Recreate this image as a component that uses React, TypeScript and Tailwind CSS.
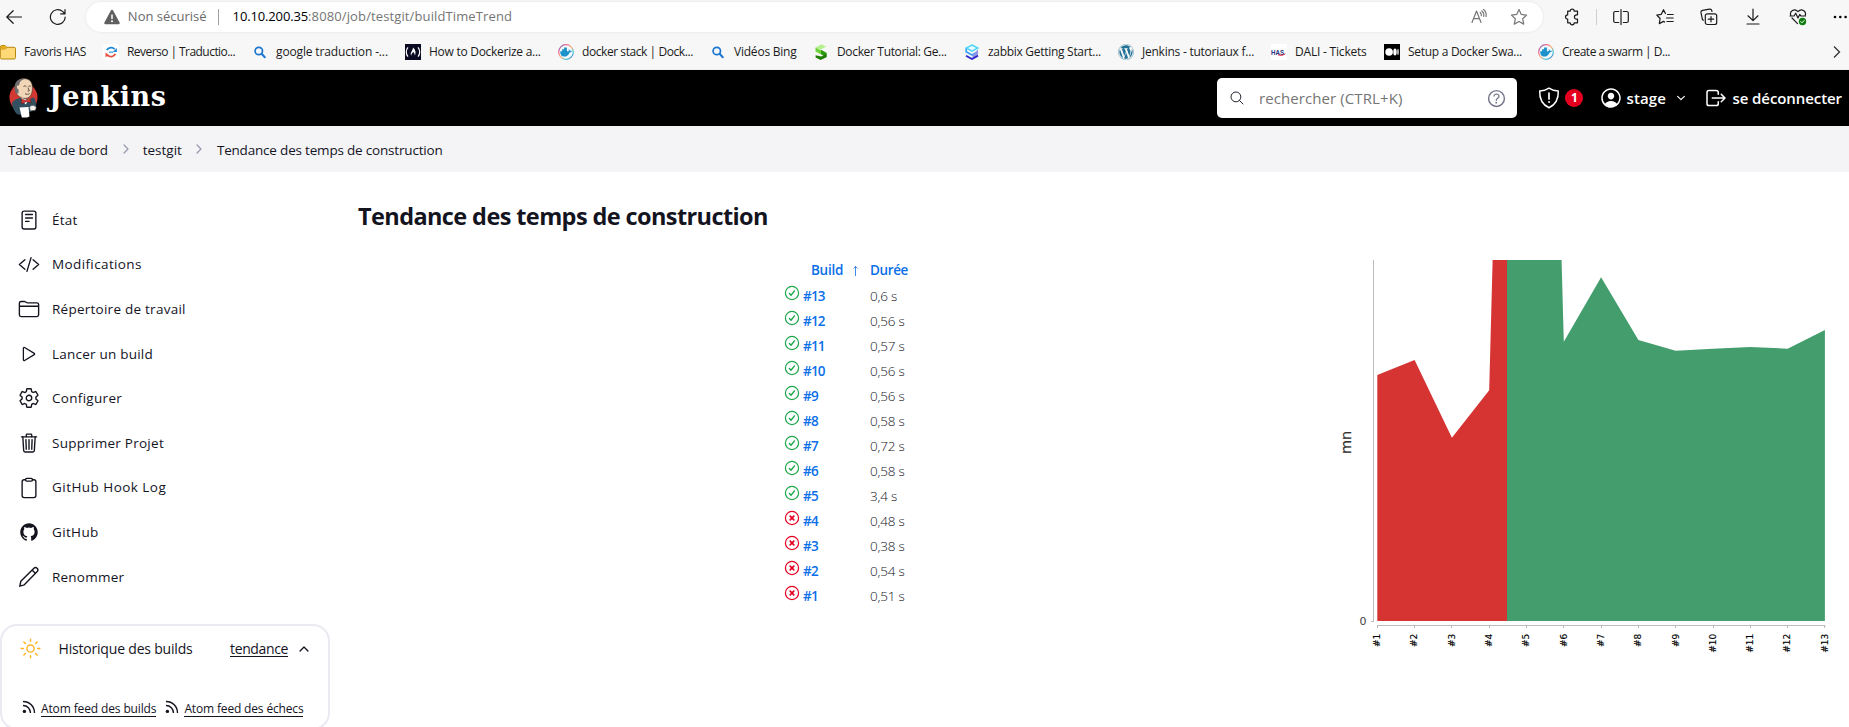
import type { ReactNode } from "react";
import {
  IoChevronDown,
  IoChevronForward,
  IoChevronUp,
  IoClipboardOutline,
  IoCodeSlashOutline,
  IoFolderOutline,
  IoHelpCircleOutline,
  IoLogOutOutline,
  IoLogoGithub,
  IoPersonCircleOutline,
  IoPlayOutline,
  IoReaderOutline,
  IoSearchOutline,
  IoSettingsOutline,
  IoSunnyOutline,
  IoTrashOutline,
} from "react-icons/io5";
import { FaWordpress } from "react-icons/fa";

/* ---------- Browser toolbar icons ---------- */

function Glyph({ children, className = "" }: { children: ReactNode; className?: string }) {
  return (
    <svg
      viewBox="0 0 18 18"
      width="18"
      height="18"
      fill="none"
      stroke="currentColor"
      strokeWidth="1.2"
      strokeLinecap="round"
      strokeLinejoin="round"
      className={`shrink-0 ${className}`}
    >
      {children}
    </svg>
  );
}

const BackIcon = () => (
  <Glyph>
    <path d="M16.5 9H2M8.2 2.7L1.8 9l6.4 6.3" />
  </Glyph>
);

const ReloadIcon = () => (
  <Glyph>
    <path d="M16.2 9A7.4 7.4 0 1 1 13.6 3.4L16 5.8M16 1.6v4.3h-4.3" />
  </Glyph>
);

const WarningIcon = () => (
  <svg viewBox="0 0 16 16" width="16" height="16" className="shrink-0">
    <path d="M8 .8c.5 0 .9.3 1.1.7l6.5 12c.4.8-.1 1.7-1 1.7H1.400c-.9 0-1.400-.9-1-1.700l6.500-12C7.100 1.100 7.500.8 8 .8z" fill="#5f5f5f" />
    <path d="M8 5.400v4.600" stroke="#fff" strokeWidth="1.500" />
    <circle cx="8" cy="12.300" r="1" fill="#fff" />
  </svg>
);

const ReadAloudIcon = () => (
  <Glyph className="text-[#767676]">
    <path d="M2 14.500L6.500 3l4.500 11.500M3.600 10.600h5.800M10.200 4.500c1 .8 1.300 2 1.100 3.200M11.800 2.900c1.700 1.300 2.300 3.400 1.900 5.500M13.500 1.500c2.300 1.800 3 4.400 2.600 7" />
  </Glyph>
);

const StarIcon = () => (
  <Glyph className="text-[#767676]">
    <path d="M9 1.500l2.300 4.900 5.300.7-3.900 3.700 1 5.300L9 13.500l-4.700 2.600 1-5.300L1.400 7.100l5.300-.7z" />
  </Glyph>
);

const PuzzleIcon = () => (
  <Glyph>
    <path d="M4.700 3.200h2.500a2 2 0 0 1 4 0h3.300v3.600h-.9a2.200 2.200 0 0 0 0 4.400h.9v3.600h-3.300a2 2 0 0 1-4 0H4.700v-3.600a2.200 2.200 0 0 1 0-4.400z" />
  </Glyph>
);

const SplitIcon = () => (
  <Glyph>
    <path d="M6.700 3.500H3.200A1.500 1.500 0 0 0 1.700 5v8a1.500 1.500 0 0 0 1.500 1.500h3.500M11.300 3.500h3.500A1.500 1.500 0 0 1 16.300 5v8a1.500 1.500 0 0 1-1.500 1.500h-3.500M9 1.500v15" />
  </Glyph>
);

const FavoritesIcon = () => (
  <Glyph>
    <path d="M9.400 5.500L7.500 1.700 5.300 6.300.8 7l3.300 3.500-.8 5.100 4.200-2.200 1.200.6M11.500 6.500h5.700M10.500 10h6.700M11 13.500h6.200" />
  </Glyph>
);

const CollectionsIcon = () => (
  <Glyph>
    <rect x="5.300" y="5.800" width="11.400" height="10.700" rx="2" />
    <path d="M11 8.500v5.300M8.300 11.200h5.400M3.300 12.300a2 2 0 0 1-1-1.300L1 4.700a2 2 0 0 1 1.500-2.300l7-1.300a2 2 0 0 1 2.300 1.500l.2.900" />
  </Glyph>
);

const DownloadIcon = () => (
  <Glyph>
    <path d="M9 1v11M4 7.800L9 12.600l5-4.800M3 16h12" />
  </Glyph>
);

const HealthIcon = () => (
  <Glyph>
    <path d="M1.800 7.500C.2 3.200 5.500-.2 9 3.700c3.500-3.900 8.800-.5 7.200 3.800M3 10l5.500 5.600M1 8h4l1.700-2.800L9 10l1.700-3.500L12 8h4.500" />
    <circle cx="13.500" cy="13.500" r="3.700" fill="#107c10" stroke="none" />
    <path d="M11.800 13.600l1.200 1.200 2.200-2.300" stroke="#fff" strokeWidth="1" />
  </Glyph>
);

const MoreIcon = () => (
  <svg viewBox="0 0 16 4" width="16" height="4" className="shrink-0">
    <circle cx="2" cy="2" r="1.300" />
    <circle cx="7.300" cy="2" r="1.300" />
    <circle cx="12.600" cy="2" r="1.300" />
  </svg>
);

/* ---------- Bookmark favicons ---------- */

const Favicon = ({ children }: { children: ReactNode }) => (
  <svg viewBox="0 0 16 16" width="16" height="16" className="shrink-0">
    {children}
  </svg>
);

const FolderFav = () => (
  <Favicon>
    <path d="M.3 3.200A1.700 1.700 0 0 1 2 1.500h3.200l1.600 1.800H14a1.500 1.500 0 0 1 1.500 1.500v8.700A1.500 1.500 0 0 1 14 15H1.800a1.500 1.500 0 0 1-1.500-1.500z" fill="#ffd977" stroke="#b8860b" />
    <path d="M.8 5h4.700l1.500-1.600" fill="none" stroke="#b8860b" strokeWidth=".8" />
    <path d="M1 2.300h4.200l1 1.200-1.200 1.200H1z" fill="#e5a80c" />
  </Favicon>
);

const ReversoFav = () => (
  <Favicon>
    <rect width="16" height="16" rx="3" fill="#fff" />
    <path d="M3.800 6.200A4.700 4.700 0 0 1 11.700 5.300" fill="none" stroke="#1f86d8" strokeWidth="1.800" />
    <path d="M13.800 3.900v4h-4z" fill="#1f86d8" />
    <path d="M12.300 9.800A4.700 4.700 0 0 1 4.600 11.200" fill="none" stroke="#e8503f" strokeWidth="1.800" />
    <path d="M2.500 8.600v4.400l4-1.500z" fill="#e8503f" />
    <path d="M6 8.200h4.200" stroke="#5aaae6" strokeWidth="1.500" />
  </Favicon>
);

const SearchFav = () => (
  <Favicon>
    <circle cx="6.800" cy="7" r="3.700" fill="none" stroke="#1b76d2" strokeWidth="1.700" />
    <path d="M9.600 9.800l3.200 3.400" stroke="#1b76d2" strokeWidth="2" strokeLinecap="round" />
  </Favicon>
);

const CampFav = () => (
  <Favicon>
    <rect width="16" height="16" fill="#0a0a23" />
    <path d="M3 3.300c-2.300 2.700-2.300 6.700 0 9.400M13 3.300c2.300 2.700 2.300 6.700 0 9.400" fill="none" stroke="#fff" strokeWidth="1.200" />
    <path d="M8 3.500c2.600 2.300 3.400 5.400 1.700 8.200.3-1.900-.6-2.500-1.500-3.900-.6 1.500-2.200 2.100-1.800 3.900C4.300 9 7.800 7 8 3.500z" fill="#fff" />
  </Favicon>
);

const DockerFav = () => (
  <Favicon>
    <defs>
      <linearGradient id="dockerRing" x1="0" y1="0" x2="1" y2="1">
        <stop offset="0" stopColor="#3b6fd0" />
        <stop offset=".25" stopColor="#f06292" />
        <stop offset=".5" stopColor="#ffab6b" />
        <stop offset=".75" stopColor="#3fc9d8" />
        <stop offset="1" stopColor="#5b4fc0" />
      </linearGradient>
    </defs>
    <circle cx="8" cy="8" r="7.300" fill="#f3fbff" stroke="url(#dockerRing)" strokeWidth="1.200" />
    <path d="M2.200 7.200h1.900V5.300h2V3.600h2.800v3.600h1.800c.2-1 .1-1.500-.3-2.300 1.100.5 1.600 1.200 1.600 2 .8-.1 1.500 0 2 .4-.5.800-1.300 1.100-2.300 1.100-1 2.600-2.900 4.200-5.700 4.200C3.500 12.600 2.100 10.600 2.200 7.200z" fill="#1d91c9" />
  </Favicon>
);

const StackifyFav = () => (
  <Favicon>
    <path d="M2.500 3.600L8.500.3l4.700 2.400-6 3z" fill="#b5f08e" />
    <path d="M2.500 3.600v4l5.800 2.900V6.500z" fill="#6fd43b" />
    <path d="M8 5.800l5.500 3v4.400L8 10.300z" fill="#2d9a12" />
    <path d="M13.500 9.500v3.700L7.600 16l-5-2.500v-2.300l5.700 1.300z" fill="#1f7d08" />
  </Favicon>
);

const SpiceFav = () => (
  <Favicon>
    <path d="M8 1l5.800 3L8 7.200 2.200 4z" fill="#eafcff" stroke="#4fd6f5" strokeWidth="1.500" />
    <path d="M2.200 4.500v3.300L8 11l5.800-3.200" fill="none" stroke="#3aa2f2" strokeWidth="1.700" />
    <path d="M14 5.500v6.300L8.500 15v-4z" fill="#8e97e8" />
    <path d="M2 11.700L8 15l6-3.300" fill="none" stroke="#2a25c9" strokeWidth="1.800" />
  </Favicon>
);

const WordpressFav = () => <FaWordpress size={16} className="shrink-0 text-[#207196]" />;

const HasFav = () => (
  <Favicon>
    <rect width="16" height="16" fill="#fff" />
    <text x="0" y="10.800" fontSize="8" fontWeight="700" fontFamily="Liberation Sans, sans-serif" fill="#27307c" textLength="13" lengthAdjust="spacingAndGlyphs">
      HAS
    </text>
    <path d="M7 10.800c2.500.9 5.300.6 7.500-1.100" stroke="#e1203c" strokeWidth="1" fill="none" />
  </Favicon>
);

const MediumFav = () => (
  <Favicon>
    <rect width="16" height="16" fill="#000" />
    <circle cx="5.100" cy="8" r="3.800" fill="#fff" />
    <ellipse cx="11" cy="8" rx="1.700" ry="3.600" fill="#fff" />
    <ellipse cx="14" cy="8" rx=".7" ry="3.300" fill="#fff" />
  </Favicon>
);

const bookmarks: { icon: () => ReactNode; label: string; item: string; text: string }[] = [
  { icon: FolderFav, label: "Favoris HAS", item: "w-[103px]", text: "tracking-[-0.35px]" },
  { icon: ReversoFav, label: "Reverso | Traductio...", item: "w-[149px]", text: "tracking-[-0.55px]" },
  { icon: SearchFav, label: "google traduction -...", item: "w-[153px]", text: "tracking-[-0.14px]" },
  { icon: CampFav, label: "How to Dockerize a...", item: "w-[153px]", text: "tracking-[-0.27px]" },
  { icon: DockerFav, label: "docker stack | Dock...", item: "w-[152px]", text: "tracking-[-0.43px]" },
  { icon: SearchFav, label: "Vidéos Bing", item: "w-[103px]", text: "tracking-[-0.22px]" },
  { icon: StackifyFav, label: "Docker Tutorial: Ge...", item: "w-[151px]", text: "tracking-[-0.34px]" },
  { icon: SpiceFav, label: "zabbix Getting Start...", item: "w-[154px]", text: "tracking-[-0.29px]" },
  { icon: WordpressFav, label: "Jenkins - tutoriaux f...", item: "w-[153px]", text: "tracking-[-0.24px]" },
  { icon: HasFav, label: "DALI - Tickets", item: "w-[113px]", text: "tracking-[-0.2px]" },
  { icon: MediumFav, label: "Setup a Docker Swa...", item: "w-[154px]", text: "tracking-[-0.29px]" },
  { icon: DockerFav, label: "Create a swarm | D...", item: "w-[153px]", text: "tracking-[-0.5px]" },
];

function BrowserChrome() {
  return (
    <div className="h-[70px] shrink-0 border-b border-[#ececec] bg-[#f7f7f7] text-[#1b1b1b]">
      <div className="flex h-[34px] items-center">
        <div className="flex w-[86px] items-center gap-[26px] pl-[5px]">
          <BackIcon />
          <ReloadIcon />
        </div>
        <div className="flex h-[30px] w-[1459px] items-center rounded-full bg-white pr-[15px] pl-[18px] text-[13px] shadow-[0_0_3px_rgba(0,0,0,0.09)]">
          <WarningIcon />
          <span className="ml-2 text-[#6a6a6a]">Non sécurisé</span>
          <span className="mx-[11px] h-4 w-px bg-[#a0a0a0]" />
          <span className="ml-[3px] tracking-[-0.14px] text-black">10.10.200.35</span>
          <span className="tracking-[0.12px] text-[#757575]">:8080/job/testgit/buildTimeTrend</span>
          <span className="ml-auto flex gap-[22px]">
            <ReadAloudIcon />
            <StarIcon />
          </span>
        </div>
        <div className="flex flex-1 items-center pl-5">
          <PuzzleIcon />
          <span className="mx-[15px] h-4 w-px bg-[#cfcfcf]" />
          <div className="flex items-center gap-[26.300px]">
            <SplitIcon />
            <FavoritesIcon />
            <CollectionsIcon />
            <DownloadIcon />
            <HealthIcon />
            <MoreIcon />
          </div>
        </div>
      </div>
      <div className="flex h-[35px] items-center text-xs">
        {bookmarks.map(({ icon: Icon, label, item, text }) => (
          <div key={label} className={`flex shrink-0 items-center gap-2 whitespace-nowrap ${item}`}>
            <Icon />
            <span className={text}>{label}</span>
          </div>
        ))}
        <svg viewBox="0 0 8 14" width="8" height="14" className="mr-[8px] ml-auto" fill="none" stroke="#333" strokeWidth="1.300">
          <path d="M1 1.500L6.500 7 1 12.500" />
        </svg>
      </div>
    </div>
  );
}

/* ---------- Jenkins ---------- */

const JenkinsMascot = () => (
  <svg viewBox="0 0 29 40" width="29" height="40" className="shrink-0">
    <ellipse cx="14.500" cy="19.500" rx="14" ry="14.500" fill="#d33833" />
    <path d="M6.500 13C5 5 9 .5 15 .6c6 .1 8.700 4 8.400 9.900-.2 5-1.700 8.500-5.400 9.700-4 1-8-1.200-10-4z" fill="#f0d6b7" stroke="#3a2c28" strokeWidth=".6" />
    <path d="M6.700 15C4 9 6 2 12 .9c1.200-.2 2.600-.3 3.600 0C11 2 10.400 5 10 8c-.6-1-1.900-.9-2.100.6-.2 1.700.7 2.900 1.800 2.900l-.3 4z" fill="#6d6b6d" />
    <path d="M14.500 8.500c1-.9 2-.7 2.800 0M19.500 8.400c.9-.6 1.700-.5 2.400 0M16 15.700c1.700.9 3.300.8 4.600-.2M19 9.500l1.300 3.300-1.700.3" fill="none" stroke="#3a2c28" strokeWidth=".8" />
    <path d="M3 24.500c2.500-3 5-4 8.500-4.800L19 22l5.500-2.800c2.300 2.500 3 6 2.700 10.300L23 33l-8 4-6.500-.5C5 33.500 3 29 3 24.500z" fill="#335061" />
    <path d="M11.500 19.500l5 7 5.500-6.500-4.500 1.700z" fill="#fff" />
    <path d="M12 20.500l4.500 2 5-2.300.6 4.600-5-1-4.300 2.200z" fill="#d33833" stroke="#3a1010" strokeWidth=".4" />
    <path d="M10.500 29.500l9-.5 1 9.500-2.500 1h-5.200z" fill="#fff" />
    <path d="M20.500 29c2.300-2.200 4.800-1.700 6.700.3l-.8 3-5 .5z" fill="#f7f1ec" stroke="#555" strokeWidth=".5" />
  </svg>
);

const ShieldIcon = () => (
  <svg viewBox="0 0 22 22" width="22" height="22" fill="none" stroke="#fff" strokeWidth="1.500" strokeLinejoin="round" strokeLinecap="round" className="shrink-0">
    <path d="M11 1.200c2.600 1.800 5.700 2.700 9.300 2.800.3 7.400-2 13.300-9.300 16.800C3.700 17.300 1.400 11.400 1.700 4c3.600-.1 6.700-1 9.300-2.800z" />
    <path d="M11 6v6" strokeWidth="1.700" />
    <circle cx="11" cy="15" r=".6" fill="#fff" strokeWidth=".8" />
  </svg>
);

function JenkinsHeader() {
  return (
    <header className="flex h-14 shrink-0 items-center bg-black text-[15px] font-semibold text-white">
      <a className="flex items-center gap-[11px] pl-[9px]">
        <JenkinsMascot />
        <span className="-mt-1 font-['DejaVu_Serif'] text-[27px] leading-none font-bold tracking-[0.600px]">Jenkins</span>
      </a>
      <div className="ml-auto flex h-10 w-[300px] items-center rounded-[5px] bg-white pr-[11px] pl-3 font-normal">
        <IoSearchOutline size={16} className="text-[#22222e]" />
        <span className="ml-[13.500px] tracking-[0.09px] text-[#757575]">rechercher (CTRL+K)</span>
        <IoHelpCircleOutline size={23} className="ml-auto -mr-0.5 text-[#73738c]" />
      </div>
      <div className="ml-[21px] flex items-center gap-[5px]">
        <ShieldIcon />
        <span className="flex size-[18px] items-center justify-center rounded-full bg-[#e6001f] text-xs leading-none font-bold">1</span>
      </div>
      <div className="ml-[16px] flex w-[88px] items-center">
        <IoPersonCircleOutline size={24} />
        <span className="ml-[3px] tracking-[0.12px]">stage</span>
        <IoChevronDown size={12} className="ml-auto" />
      </div>
      <div className="ml-[17px] flex items-center">
        <IoLogOutOutline size={24} />
        <span className="mr-[7px] ml-[4px] tracking-[-0.08px]">se déconnecter</span>
      </div>
    </header>
  );
}

function Breadcrumbs() {
  return (
    <nav className="flex h-[46px] shrink-0 items-center bg-[#f4f4f7] pt-[2px] pl-[8px] text-[13.500px]">
      <span className="tracking-[-0.22px]">Tableau de bord</span>
      <IoChevronForward size={14} className="-mt-[3px] mr-[10px] ml-[11px] text-[#9a9ab0]" />
      <span>testgit</span>
      <IoChevronForward size={14} className="-mt-[3px] mr-[11px] ml-[10px] text-[#9a9ab0]" />
      <span className="tracking-[-0.19px]">Tendance des temps de construction</span>
    </nav>
  );
}

const PencilIcon = () => (
  <svg viewBox="0 0 22 22" width="22" height="22" fill="none" stroke="currentColor" strokeWidth="1.400" strokeLinejoin="round" className="shrink-0">
    <path d="M1.800 20.200l1-4.900L15.700 2.400c1-1 2.500-1 3.400-.1.900.9.900 2.400-.1 3.400L6.300 18.800z" />
    <path d="M14.100 4.100l3.400 3.300" />
  </svg>
);

const tasks: { icon: ReactNode; label: string; text: string }[] = [
  { icon: <IoReaderOutline size={22} />, label: "État", text: "tracking-[0.25px]" },
  { icon: <IoCodeSlashOutline size={23} />, label: "Modifications", text: "tracking-[0.38px]" },
  { icon: <IoFolderOutline size={22} />, label: "Répertoire de travail", text: "tracking-[0.25px]" },
  { icon: <IoPlayOutline size={20} />, label: "Lancer un build", text: "tracking-[0.22px]" },
  { icon: <IoSettingsOutline size={22} />, label: "Configurer", text: "tracking-[0.3px]" },
  { icon: <IoTrashOutline size={22} />, label: "Supprimer Projet", text: "tracking-[0.26px]" },
  { icon: <IoClipboardOutline size={22} />, label: "GitHub Hook Log", text: "tracking-[0.46px]" },
  { icon: <IoLogoGithub size={20} />, label: "GitHub", text: "tracking-[0.35px]" },
  { icon: <PencilIcon />, label: "Renommer", text: "tracking-[0.22px]" },
];

const FeedIcon = () => (
  <svg viewBox="0 0 14 14" width="14" height="14" fill="none" stroke="#14141f" strokeWidth="1.400" className="-mt-1.5 shrink-0">
    <path d="M1 1.500c6.600 0 11.500 4.900 11.500 11.500M1 5.500c4.300 0 7.500 3.200 7.500 7.500" />
    <circle cx="2.400" cy="11.400" r="1.700" fill="#14141f" stroke="none" />
  </svg>
);

function SidePanel() {
  return (
    <aside className="flex w-[330px] shrink-0 flex-col">
      <ul className="mt-[25.700px] text-[13.500px]">
        {tasks.map(({ icon, label, text }) => (
          <li key={label} className="flex h-[44.600px] items-center">
            <span className="ml-[18px] flex w-[22px] justify-center">{icon}</span>
            <span className={`ml-[12px] ${text}`}>{label}</span>
          </li>
        ))}
      </ul>
      <section className="mt-[25.400px] h-[106px] shrink-0 rounded-[17px] border-2 border-[#eaeaf2]">
        <div className="flex h-[45px] items-center pl-[16.500px] text-sm">
          <IoSunnyOutline size={23} className="text-[#ffb31f]" />
          <span className="ml-[17px] tracking-[-0.19px]">Historique des builds</span>
          <span className="ml-auto border-b border-[#14141f] leading-[15px] tracking-[-0.37px]">tendance</span>
          <IoChevronUp size={14} className="mr-[17px] ml-[9px]" strokeWidth="8" />
        </div>
        <div className="mt-[31px] flex items-center pl-[20px] text-xs">
          <FeedIcon />
          <span className="ml-[5px] border-b border-[#14141f] leading-[14px] tracking-[-0.13px]">Atom feed des builds</span>
          <span className="w-[9px]" />
          <FeedIcon />
          <span className="ml-[5px] border-b border-[#14141f] leading-[14px] tracking-[-0.16px]">Atom feed des échecs</span>
        </div>
      </section>
    </aside>
  );
}

const builds: { id: number; duration: string; ok: boolean }[] = [
  { id: 13, duration: "0,6 s", ok: true },
  { id: 12, duration: "0,56 s", ok: true },
  { id: 11, duration: "0,57 s", ok: true },
  { id: 10, duration: "0,56 s", ok: true },
  { id: 9, duration: "0,56 s", ok: true },
  { id: 8, duration: "0,58 s", ok: true },
  { id: 7, duration: "0,72 s", ok: true },
  { id: 6, duration: "0,58 s", ok: true },
  { id: 5, duration: "3,4 s", ok: true },
  { id: 4, duration: "0,48 s", ok: false },
  { id: 3, duration: "0,38 s", ok: false },
  { id: 2, duration: "0,54 s", ok: false },
  { id: 1, duration: "0,51 s", ok: false },
];

const StatusIcon = ({ ok }: { ok: boolean }) => (
  <svg viewBox="0 0 16 16" width="16" height="16" fill="none" stroke={ok ? "#1ea64b" : "#e6001f"} strokeWidth="1.200" strokeLinecap="round" strokeLinejoin="round" className="-mt-[6px] shrink-0">
    <circle cx="8" cy="8" r="6.600" />
    {ok ? <path d="M5.400 8.600l1.600 1.700 3.500-4.400" strokeWidth="1.400" /> : <path d="M6.200 6.200l3.600 3.600M9.800 6.200L6.200 9.800" strokeWidth="1.700" />}
  </svg>
);

function BuildTable() {
  return (
    <table className="mt-[24px] ml-[426px] h-fit w-[130px] table-fixed text-[13.500px]">
      <colgroup>
        <col className="w-[86px]" />
        <col />
      </colgroup>
      <thead>
        <tr className="h-[25px] text-left text-[#0b6fe8]">
          <th className="p-0 pl-[27px] font-semibold">
            <span className="flex items-center">
              <span className="w-[41px] tracking-[-0.28px]">Build</span>
              <svg viewBox="0 0 8 12" width="8" height="12" fill="none" stroke="currentColor" strokeWidth=".8">
                <path d="M3.500 11V1.500M1.800 3.400l1.700-2 1.700 2" />
              </svg>
            </span>
          </th>
          <th className="p-0 font-semibold tracking-[-0.37px]">Durée</th>
        </tr>
      </thead>
      <tbody>
        {builds.map(({ id, duration, ok }) => (
          <tr key={id} className="h-[25px]">
            <td className="p-0">
              <span className="flex h-[25px] items-center">
                <StatusIcon ok={ok} />
                <span className="ml-[3px] pt-px font-semibold tracking-[-0.800px] text-[#0b6fe8]">#{id}</span>
              </span>
            </td>
            <td className="p-0 pt-px font-light tracking-[-0.200px] text-[#14141f]">{duration}</td>
          </tr>
        ))}
      </tbody>
    </table>
  );
}

const STEP = 37.3;
const LEFT = 57.3;
const BASE = 381;
const heights = [246, 261, 183.300, 230.700, 1649, 279.300, 343.700, 281, 270.300, 272.300, 274, 272.300, 291];
const outline = heights.map((h, i) => `${(LEFT + i * STEP).toFixed(1)},${(BASE - h).toFixed(1)}`).join(" ");
const area = `${LEFT},${BASE} ${outline} ${(LEFT + 12 * STEP).toFixed(1)},${BASE}`;

function TrendChart() {
  return (
    <svg viewBox="0 0 529 430" width="529" height="430" className="shrink-0" fontFamily="DejaVu Sans, sans-serif">
      <defs>
        <clipPath id="failed">
          <rect x="57" y="20" width="130" height="361" />
        </clipPath>
        <clipPath id="passed">
          <rect x="187" y="20" width="318" height="361" />
        </clipPath>
      </defs>
      <polygon points={area} fill="#d63333" clipPath="url(#failed)" />
      <polygon points={area} fill="#449d6d" clipPath="url(#passed)" />
      <g stroke="#bcbcbc" fill="none">
        <path d="M53.500 20v361.500M51 381.500h3M57 385.500h448.500" />
        {heights.map((_, i) => (
          <path key={i} d={`M${Math.floor(LEFT + i * STEP) + 0.5} 385v3`} />
        ))}
      </g>
      <text x="39.500" y="385" fontSize="11" fill="#404040">
        0
      </text>
      <text transform="translate(31 214) rotate(-90)" fontSize="14.500" fill="#333" stroke="#333" strokeWidth=".2">
        mn
      </text>
      {heights.map((_, i) => (
        <text key={i} transform={`translate(${(LEFT + i * STEP + 2.800).toFixed(1)} 393.700) rotate(-90)`} textAnchor="end" fontSize="9" fill="#000" stroke="#000" strokeWidth=".15">
          #{i + 1}
        </text>
      ))}
    </svg>
  );
}

export default function App() {
  return (
    <div className="flex h-[727px] w-[1849px] flex-col overflow-hidden bg-white font-['Open_Sans','Noto_Sans',sans-serif] text-[#14141f]">
      <BrowserChrome />
      <JenkinsHeader />
      <Breadcrumbs />
      <div className="flex min-h-0 flex-1">
        <SidePanel />
        <main className="flex min-w-0 flex-1 flex-col pl-7">
          <h1 className="mt-[26px] text-[23.500px] leading-9 font-bold tracking-[-0.600px]">Tendance des temps de construction</h1>
          <div className="flex min-h-0 justify-between">
            <BuildTable />
            <div className="mt-[6px]">
              <TrendChart />
            </div>
          </div>
        </main>
      </div>
    </div>
  );
}
